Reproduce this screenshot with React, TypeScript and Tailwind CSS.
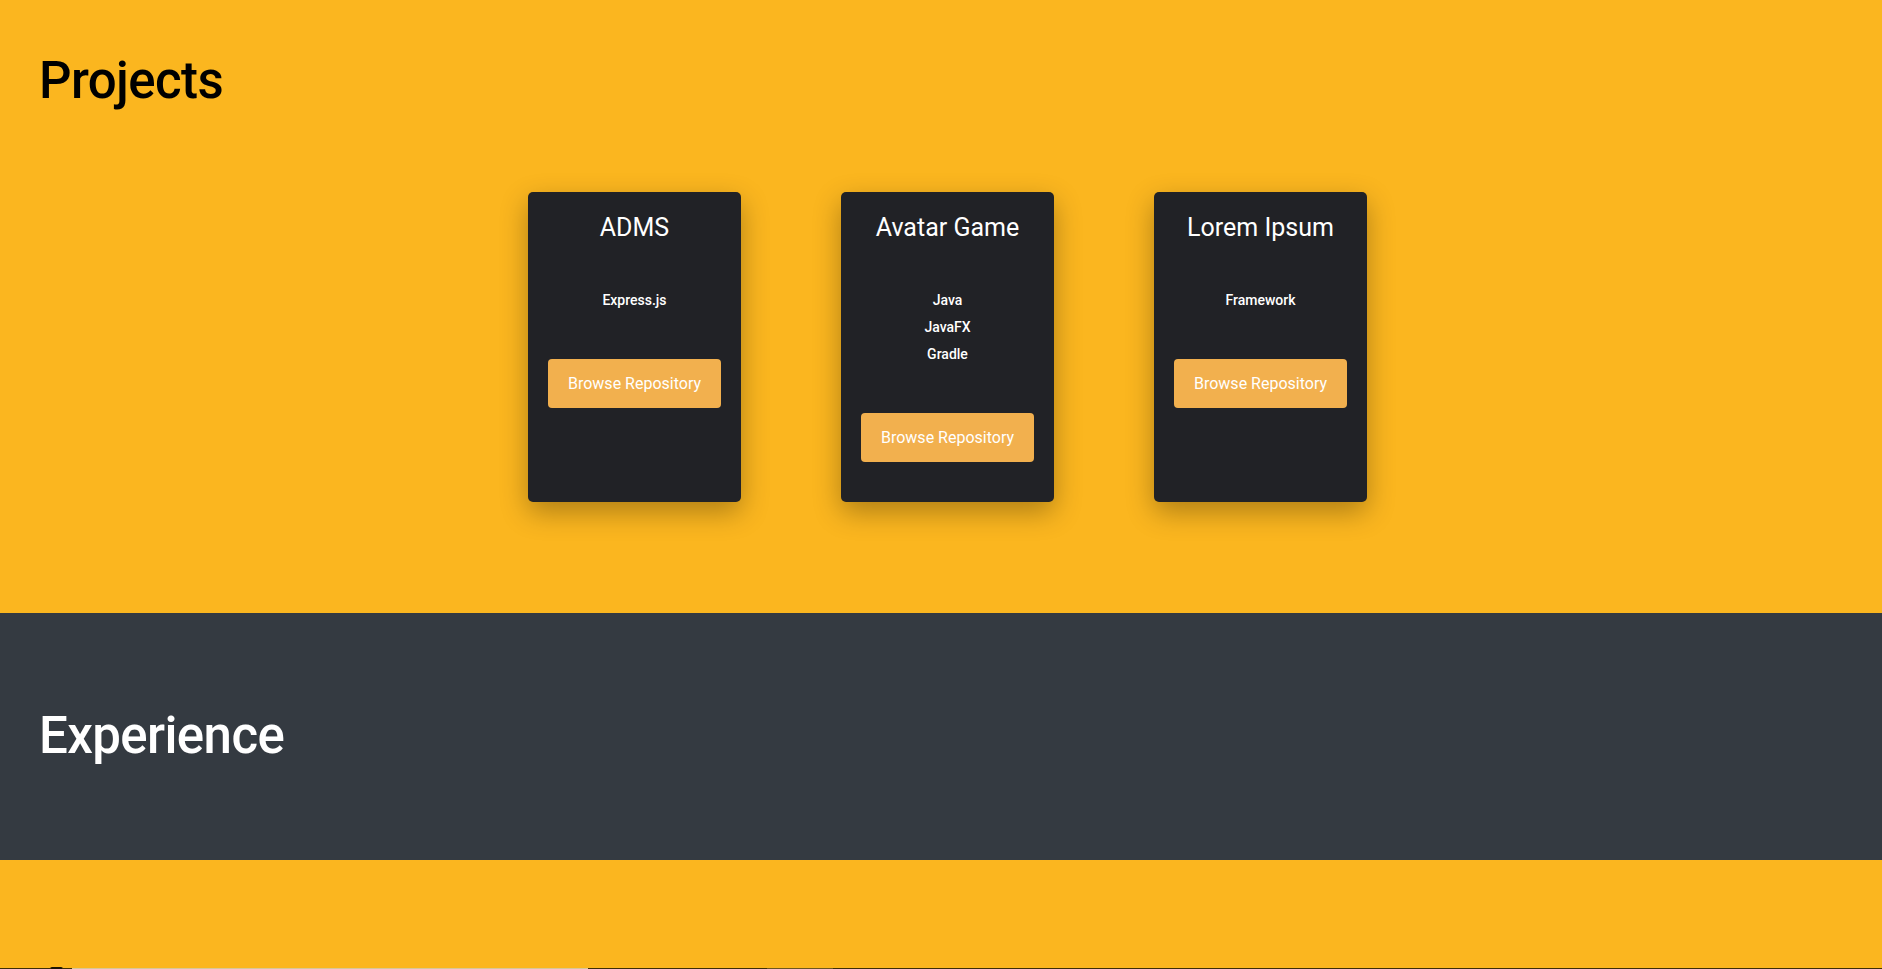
import React from "react";

type Project = { title: string; tech: string[] };

const projects: Project[] = [
  { title: "ADMS", tech: ["Express.js"] },
  { title: "Avatar Game", tech: ["Java", "JavaFX", "Gradle"] },
  { title: "Lorem Ipsum", tech: ["Framework"] },
];

function Card({ p }: { p: Project }) {
  return (
    <div className="w-[213px] h-[310px] bg-[#212226] rounded-[5px] shadow-[0_10px_28px_rgba(0,0,0,0.3)] px-5 pt-[21px] flex flex-col items-center">
      <h3 className="text-[25px] leading-[30px] text-white font-normal text-center">{p.title}</h3>
      <ul className="mt-[44px] flex flex-col items-center">
        {p.tech.map((t) => (
          <li key={t} className="text-[14px] leading-[27px] text-white font-medium text-center">
            {t}
          </li>
        ))}
      </ul>
      <button className="mt-[45px] w-full h-[49px] rounded-[4px] bg-[#f2b04e] text-white text-[16px] leading-6">
        Browse Repository
      </button>
    </div>
  );
}

export default function App() {
  return (
    <div className="w-full min-h-screen bg-[#fbb61f] font-['Roboto',sans-serif] overflow-hidden">
      <section className="bg-[#fbb61f] h-[613px] pt-[50px] px-[39px]">
        <h1 className="text-[51px] leading-[62.4px] text-black font-medium tracking-[-0.6px]">Projects</h1>
        <div className="mt-[80px] flex justify-center gap-[100px] pl-[13px]">
          {projects.map((p) => (
            <Card key={p.title} p={p} />
          ))}
        </div>
      </section>
      <section className="bg-[#343a41] h-[247px] flex items-center px-[39px]">
        <h2 className="text-[51px] leading-[62.4px] text-white font-medium tracking-[-0.6px]">Experience</h2>
      </section>
      <section className="bg-[#fbb61f] h-[200px] pt-[107px]">
        <div className="flex h-[2px] items-end">
          <div className="w-[50px] h-[1px] bg-[#3c2e08]" />
          <div className="w-[13px] h-[2px] bg-[#1a1405] rounded-t-full" />
          <div className="w-[9px] h-[1px] bg-[#3c2e08]" />
          <div className="w-[516px] h-[1px] bg-[#d8c79a]" />
          <div className="w-[179px] h-[1px] bg-[#3c2e08]" />
          <div className="w-[66px] h-[1px] bg-[#6b5623]" />
          <div className="flex-1 h-[1px] bg-[#3c2e08]" />
        </div>
      </section>
    </div>
  );
}
